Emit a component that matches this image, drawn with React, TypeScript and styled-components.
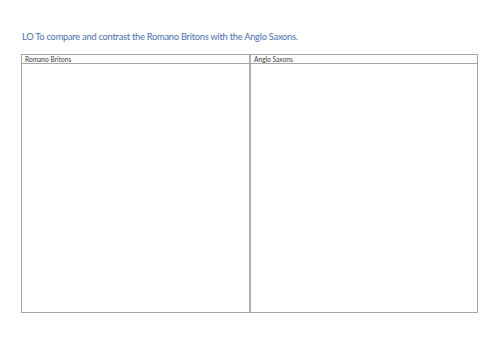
import React from "react";
import styled, { createGlobalStyle } from "styled-components";

const Global = createGlobalStyle`
  html, body { margin: 0; padding: 0; background: #ffffff; }
  body { font-family: Lato, "Liberation Sans", sans-serif; }
`;

const Page = styled.div`
  width: 500px;
  height: 354px;
  box-sizing: border-box;
  padding: 30px 22px 0 21px;
  display: flex;
  flex-direction: column;
  background: #ffffff;
`;

const Title = styled.h1`
  margin: 0 0 11px 1px;
  font-family: Lato, "Liberation Sans", sans-serif;
  font-weight: 400;
  font-size: 9.3px;
  line-height: 13px;
  color: #4a6fb5;
  letter-spacing: -0.25px;
`;

const Table = styled.div`
  width: 457px;
  height: 259px;
  box-sizing: border-box;
  border: 1px solid #a6a6a6;
  display: grid;
  grid-template-columns: 227px 1fr;
  grid-template-rows: 9px 1fr;
`;

const Cell = styled.div<{ $right?: boolean; $head?: boolean }>`
  box-sizing: border-box;
  border-left: ${(p) => (p.$right ? "2px solid #b0b0b0" : "none")};
  border-bottom: ${(p) => (p.$head ? "1px solid #a6a6a6" : "none")};
  font-family: Lato, "Liberation Sans", sans-serif;
  font-size: 6.6px;
  line-height: 8px;
  color: #3a3a3a;
  padding-left: 3px;
  white-space: nowrap;
  overflow: hidden;
`;

export default function App() {
  return (
    <>
      <Global />
      <Page>
        <Title>LO To compare and contrast the Romano Britons with the Anglo Saxons.</Title>
        <Table>
          <Cell $head>Romano Britons</Cell>
          <Cell $head $right>Anglo Saxons</Cell>
          <Cell />
          <Cell $right />
        </Table>
      </Page>
    </>
  );
}
